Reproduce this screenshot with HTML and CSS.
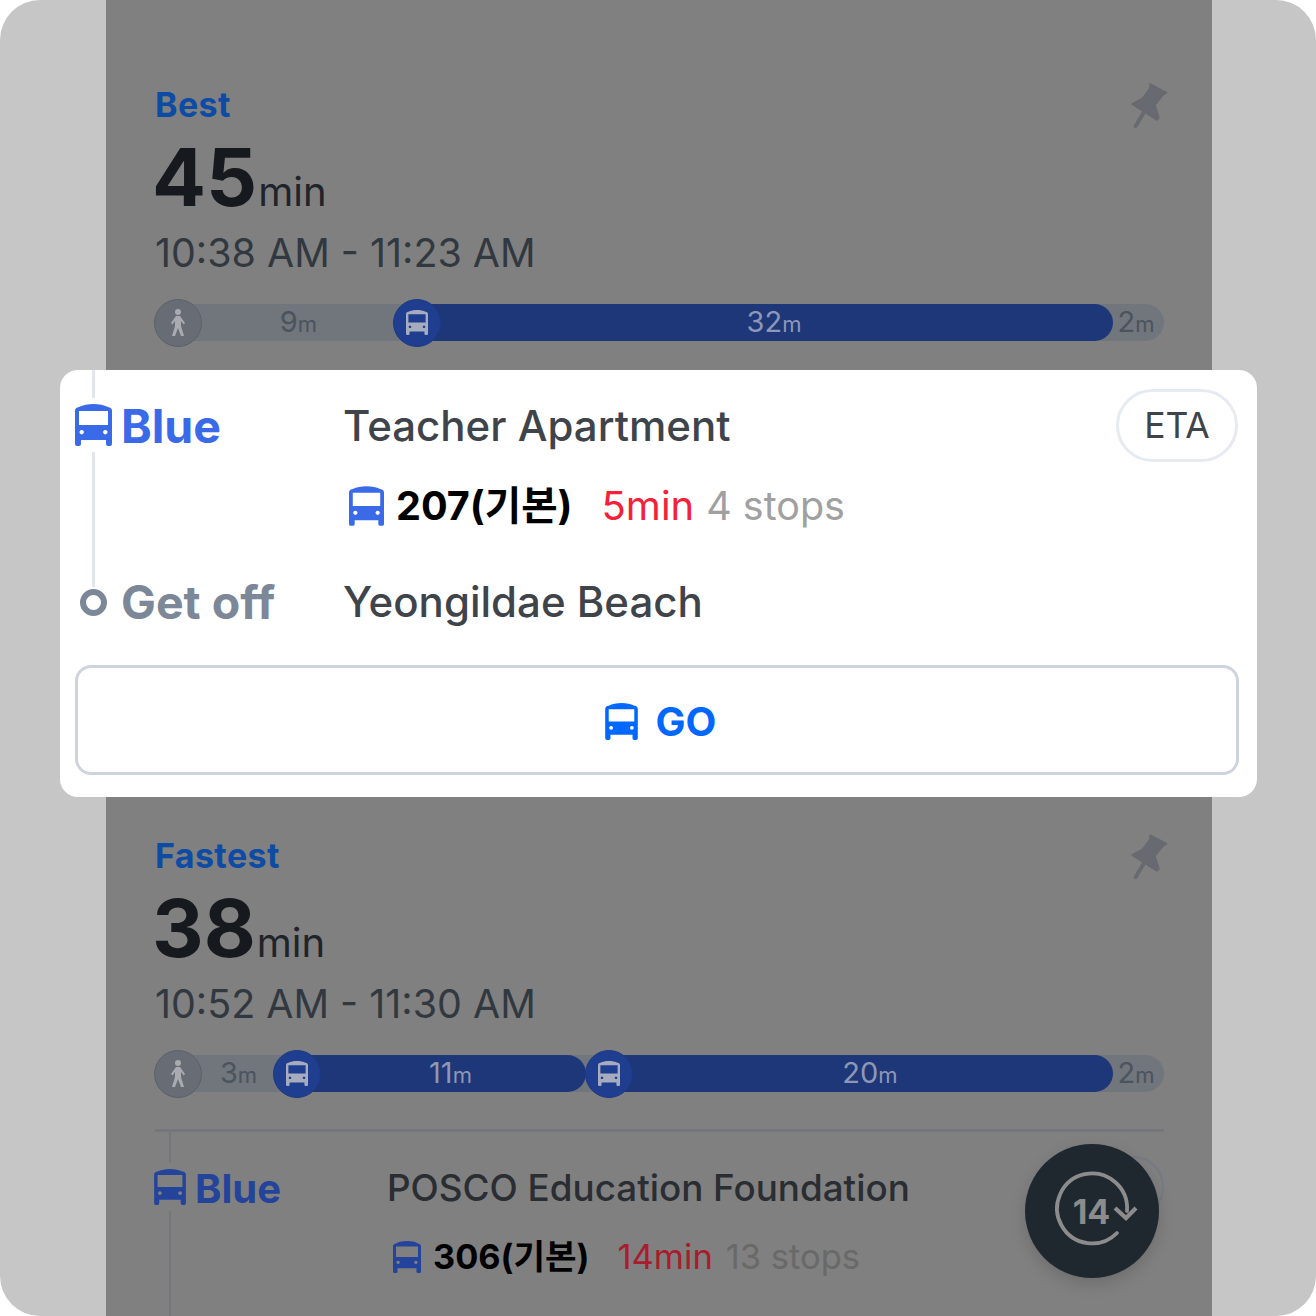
FILE: index.html
```html
<!DOCTYPE html>
<html lang="en">
<head>
    <meta charset="UTF-8">
    <meta name="viewport" content="width=device-width, initial-scale=1.0">
    <title>Transit routes</title>
    <link rel="stylesheet" href="styles.css">
</head>
<body>
    <svg class="defs" width="0" height="0" aria-hidden="true">
        <symbol id="bus" viewBox="0 0 37 42">
            <path fill="currentColor" fill-rule="evenodd" d="M4 3C8 1 13 0 18.5 0S29 1 33 3C35.5 3.3 37 4.5 37 7V40a2 2 0 0 1-2 2H33a2 2 0 0 1-2-2V36H6V40a2 2 0 0 1-2 2H2a2 2 0 0 1-2-2V7C0 4.5 1.5 3.3 4 3ZM4 7V21H33V7ZM6.7 26a2.2 2.2 0 1 0 .01 0ZM30.3 26a2.2 2.2 0 1 0 .01 0Z"/>
        </symbol>
        <symbol id="walk" viewBox="0 0 16 28">
            <circle cx="8" cy="3" r="3" fill="currentColor"/>
            <path fill="currentColor" d="M6 7H10L15 14 13.8 15.5 11 12V17L14 27H11L8 19 5 27H2L5 17V12L2.5 15.5 1 14Z"/>
        </symbol>
        <symbol id="pin" viewBox="0 0 37 45">
            <path fill="currentColor" d="M19 1 35.7 9.7 32 12 24 22 28 35 26 37 1 21 12 15 19 5Z" stroke="currentColor" stroke-width="1.5" stroke-linejoin="round"/>
            <path d="M12.5 30 4.7 43" stroke="currentColor" stroke-width="4" stroke-linecap="round"/>
        </symbol>
    </svg>

    <div class="frame">
        <main class="phone">
            <section class="route">
                <div class="route-head">
                    <span class="route-tag">Best</span>
                    <svg class="pin"><use href="#pin"/></svg>
                </div>
                <div class="duration"><b>45</b><span>min</span></div>
                <div class="times">10:38 AM - 11:23 AM</div>
                <div class="bar">
                    <div class="seg seg-walk" style="width:239px">
                        <span class="seg-icon icon-walk"><svg class="i-walk"><use href="#walk"/></svg></span>
                        <span class="seg-label">9<small>m</small></span>
                    </div>
                    <div class="seg seg-bus" style="width:719px">
                        <span class="seg-icon icon-bus"><svg class="i-bus"><use href="#bus"/></svg></span>
                        <span class="seg-label">32<small>m</small></span>
                    </div>
                    <div class="seg seg-end"><span class="seg-label">2<small>m</small></span></div>
                </div>
            </section>

            <section class="route">
                <div class="route-head">
                    <span class="route-tag">Fastest</span>
                    <svg class="pin"><use href="#pin"/></svg>
                </div>
                <div class="duration"><b>38</b><span>min</span></div>
                <div class="times">10:52 AM - 11:30 AM</div>
                <div class="bar">
                    <div class="seg seg-walk" style="width:119px">
                        <span class="seg-icon icon-walk"><svg class="i-walk"><use href="#walk"/></svg></span>
                        <span class="seg-label">3<small>m</small></span>
                    </div>
                    <div class="seg seg-bus" style="width:312px">
                        <span class="seg-icon icon-bus"><svg class="i-bus"><use href="#bus"/></svg></span>
                        <span class="seg-label">11<small>m</small></span>
                    </div>
                    <div class="seg seg-bus" style="width:527px">
                        <span class="seg-icon icon-bus"><svg class="i-bus"><use href="#bus"/></svg></span>
                        <span class="seg-label">20<small>m</small></span>
                    </div>
                    <div class="seg seg-end"><span class="seg-label">2<small>m</small></span></div>
                </div>
                <div class="detail">
                    <div class="detail-rail">
                        <i class="rail-line rail-top"></i>
                        <svg class="detail-bus"><use href="#bus"/></svg>
                        <i class="rail-line rail-fill"></i>
                    </div>
                    <div class="detail-label">Blue</div>
                    <div class="detail-main">
                        <div class="detail-stop">POSCO Education Foundation</div>
                        <div class="detail-info">
                            <svg class="detail-bus-sm"><use href="#bus"/></svg>
                            <b class="detail-no">306(기본)</b>
                            <span class="detail-wait">14min</span>
                            <span class="detail-stops">13 stops</span>
                        </div>
                    </div>
                    <div class="detail-eta"></div>
                </div>
            </section>
        </main>

        <div class="card">
            <div class="leg">
                <div class="rail">
                    <i class="line line-top"></i>
                    <svg class="leg-bus"><use href="#bus"/></svg>
                    <i class="line line-fill"></i>
                </div>
                <div class="leg-label">Blue</div>
                <div class="leg-main">
                    <div class="leg-stop">Teacher Apartment</div>
                    <div class="leg-info">
                        <svg class="info-bus"><use href="#bus"/></svg>
                        <b class="info-no">207(기본)</b>
                        <span class="info-wait">5min</span>
                        <span class="info-stops">4 stops</span>
                    </div>
                </div>
                <button class="eta" type="button">ETA</button>
            </div>
            <div class="alight">
                <div class="rail"><i class="ring"></i></div>
                <div class="leg-label alight-label">Get off</div>
                <div class="leg-stop">Yeongildae Beach</div>
            </div>
            <button class="go" type="button">
                <svg class="go-bus"><use href="#bus"/></svg>
                <span>GO</span>
            </button>
        </div>

        <div class="fab">
            <svg class="fab-icon" viewBox="0 0 84 84">
                <path d="M66 64A35 35 0 1 1 76 42" fill="none" stroke="currentColor" stroke-width="3.8" stroke-linecap="round"/>
                <path d="M65 39 76 49 86 39" fill="none" stroke="currentColor" stroke-width="4.2" transform="translate(-1 0)"/>
                <text x="40.5" y="55" text-anchor="middle" class="fab-text">14</text>
            </svg>
        </div>
    </div>
</body>
</html>
```

FILE: styles.css
```css
* {
    box-sizing: border-box;
}

html, body {
    margin: 0;
    padding: 0;
    background-color: #fff;
}

body {
    font-family: Inter, "Noto Sans CJK KR", "Noto Sans", sans-serif;
}

.defs {
    position: absolute;
}

.frame {
    position: relative;
    width: 1316px;
    height: 1316px;
    border-radius: 40px;
    overflow: hidden;
    background-color: #c6c6c6;
}

.phone {
    width: 1106px;
    height: 1316px;
    margin-left: 106px;
    padding-top: 85px;
    background-color: #808080;
    overflow: hidden;
}

.route {
    height: 751px;
    padding: 0 48px 0 49px;
}

.route-head {
    display: flex;
    justify-content: space-between;
    align-items: flex-start;
    height: 40px;
}

.route-tag {
    font-size: 34px;
    line-height: 40px;
    font-weight: 700;
    letter-spacing: 0.4px;
    color: #0d4ba5;
}

.pin {
    width: 37px;
    height: 45px;
    margin-top: -2px;
    margin-right: -4px;
    color: #676a70;
}

.duration {
    display: flex;
    align-items: baseline;
    height: 80px;
    margin: 12px 0 0 -3px;
    line-height: 80px;
    color: #16191e;
}

.duration b {
    font-size: 80px;
    font-weight: 700;
}

.duration span {
    margin-left: 1px;
    font-size: 40px;
    color: #20242a;
}

.times {
    margin-top: 12px;
    font-size: 39.4px;
    line-height: 48px;
    color: #31383f;
}

.bar {
    display: flex;
    height: 37px;
    margin-top: 27px;
    border-radius: 19px;
    background-color: #71757c;
}

.seg {
    display: flex;
    align-items: center;
    height: 37px;
    flex: none;
}

.seg-bus {
    background-color: #1e3778;
    border-radius: 19px;
    color: #8e98b6;
}

.seg-bus .seg-label {
    padding-right: 7px;
}

.seg-walk, .seg-end {
    color: #4b535d;
}

.seg-end {
    flex: 1;
    justify-content: center;
    padding-right: 5px;
}

.seg-icon {
    display: flex;
    align-items: center;
    justify-content: center;
    flex: none;
    width: 48px;
    height: 48px;
    margin: -6px 1px -6px -1px;
    border-radius: 50%;
}

.icon-walk {
    background-color: #676c75;
    border: 1px solid #5c6069;
    color: #a9abaf;
}

.icon-bus {
    background-color: #1f3e8f;
    border: 1px solid #1c3a84;
    color: #a6acbd;
}

.i-walk {
    width: 16px;
    height: 28px;
}

.i-bus {
    width: 22px;
    height: 25px;
}

.seg-label {
    flex: 1;
    text-align: center;
    font-size: 29px;
    line-height: 37px;
}

.seg-end .seg-label {
    flex: none;
}

.seg-label small {
    font-size: 22px;
}

.detail {
    display: flex;
    position: relative;
    height: 260px;
    margin-top: 37px;
    border-top: 3px solid #74767c;
}

.detail-rail {
    display: flex;
    flex-direction: column;
    align-items: center;
    flex: none;
    width: 32px;
    margin-left: -1px;
}

.rail-line {
    width: 2px;
    background-color: #74767c;
}

.rail-top {
    height: 30px;
}

.rail-fill {
    flex: 1;
}

.detail-bus {
    width: 32px;
    height: 36px;
    margin: 7px 0 6px;
    color: #24439a;
}

.detail-label {
    width: 192px;
    margin-left: 9px;
    padding-top: 34px;
    font-size: 40px;
    line-height: 46px;
    font-weight: 700;
    color: #24439a;
}

.detail-stop {
    padding-top: 33px;
    font-size: 36.8px;
    line-height: 46px;
    font-weight: 500;
    color: #2a2d32;
}

.detail-info {
    display: flex;
    align-items: center;
    margin-top: 24px;
    font-size: 34.5px;
    line-height: 44px;
}

.detail-bus-sm {
    width: 28px;
    height: 32px;
    margin: 0 12px 0 6px;
    color: #24439a;
}

.detail-no {
    font-size: 34.3px;
    font-weight: 700;
    color: #000;
}

.detail-wait {
    margin-left: 28px;
    color: #a81c2c;
}

.detail-stops {
    margin-left: 13px;
    color: #696969;
}

.detail-eta {
    position: absolute;
    right: 0;
    top: 24px;
    width: 104px;
    height: 62px;
    border: 2px solid #767a86;
    border-radius: 31px;
}

.card {
    position: absolute;
    left: 60px;
    top: 370px;
    width: 1197px;
    height: 427px;
    padding: 0 18px 0 15px;
    border-radius: 18px;
    background-color: #fff;
}

.leg, .alight {
    display: flex;
}

.leg {
    height: 217px;
}

.rail {
    display: flex;
    flex-direction: column;
    align-items: center;
    flex: none;
    width: 37px;
}

.line {
    width: 3px;
    background-color: #e1e6ee;
}

.line-top {
    height: 28px;
}

.line-fill {
    flex: 1;
}

.leg-bus {
    width: 37px;
    height: 42px;
    margin: 6px 0;
    color: #3a6ae8;
}

.leg-label {
    width: 222px;
    margin-left: 9px;
    padding-top: 30px;
    font-size: 46.5px;
    line-height: 52px;
    font-weight: 700;
    color: #3a6ae8;
}

.leg-main {
    flex: 1;
    padding-top: 30px;
}

.leg-stop {
    font-size: 42px;
    line-height: 52px;
    font-weight: 500;
    color: #3f444b;
}

.leg-info {
    display: flex;
    align-items: center;
    margin-top: 30px;
    font-size: 39.5px;
    line-height: 48px;
}

.info-bus {
    width: 35px;
    height: 40px;
    margin: 0 12px 0 6px;
    color: #3a6ae8;
}

.info-no {
    font-size: 39.6px;
    font-weight: 700;
    color: #000;
}

.info-wait {
    margin-left: 29px;
    font-size: 40px;
    color: #f5203a;
}

.info-stops {
    margin-left: 12px;
    color: #a0a0a0;
}

.eta {
    flex: none;
    width: 122px;
    height: 73px;
    margin: 19px 1px 0 0;
    padding: 0;
    border: 3px solid #e6ebf2;
    border-radius: 37px;
    background-color: #fff;
    font-family: inherit;
    font-size: 35.5px;
    color: #3f444b;
}

.alight {
    align-items: center;
    height: 30px;
}

.alight .rail {
    height: 30px;
    justify-content: center;
}

.ring {
    width: 27px;
    height: 27px;
    border: 6px solid #7c8797;
    border-radius: 50%;
}

.alight-label {
    padding-top: 0;
    line-height: 30px;
    color: #7c8797;
}

.alight .leg-stop {
    line-height: 30px;
}

.go {
    display: flex;
    align-items: center;
    justify-content: center;
    gap: 18px;
    width: 1164px;
    height: 110px;
    margin: 48px 0 0;
    padding: 2px 0 0 7px;
    border: 3px solid #ced4de;
    border-radius: 16px;
    background-color: #fff;
    font-family: inherit;
    font-size: 40px;
    font-weight: 700;
    color: #0068ff;
}

.go-bus {
    width: 33px;
    height: 37px;
}

.fab {
    position: absolute;
    left: 1025px;
    top: 1144px;
    display: flex;
    align-items: center;
    justify-content: center;
    width: 134px;
    height: 134px;
    border-radius: 50%;
    background-color: #20282f;
    box-shadow: 0 6px 16px rgba(0, 0, 0, 0.15);
    color: #8c8c8c;
}

.fab-icon {
    width: 84px;
    height: 84px;
    margin-left: 2px;
    overflow: visible;
}

.fab-text {
    font-size: 34px;
    font-weight: 700;
    fill: currentColor;
}
```
